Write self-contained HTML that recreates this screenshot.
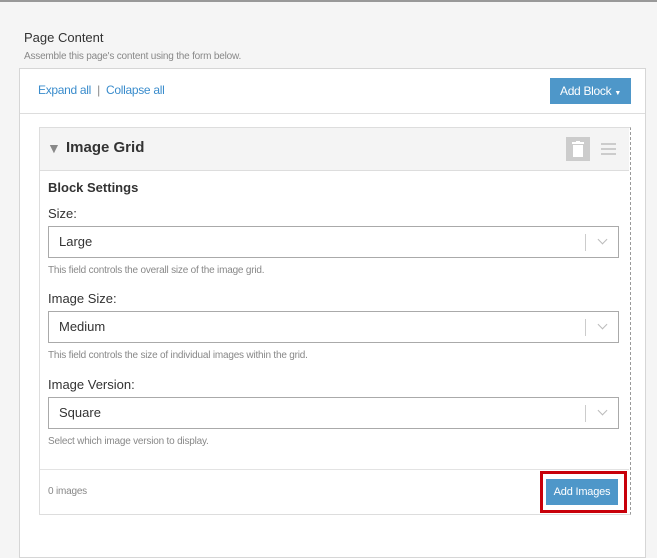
<!DOCTYPE html>
<html><head><style>
body{margin:0;width:657px;height:545px;background:#f5f5f5;font-family:"Liberation Sans",sans-serif;position:relative;overflow:hidden}
.a{position:absolute}
.lbl{font-size:13px;color:#333}
.help{font-size:10px;color:#888;letter-spacing:-0.2px}
.sel{position:absolute;left:48px;width:571px;height:32px;border:1px solid #aaa;background:#fff;box-sizing:border-box;font-size:13px;color:#333;line-height:30px;padding-left:10px}
.sel:after{content:"";position:absolute;right:32px;top:7px;height:17px;border-left:1px solid #ccc}
.chev{position:absolute;right:12px;top:9px;width:6px;height:6px;border-right:1.5px solid #bbb;border-bottom:1.5px solid #bbb;transform:rotate(45deg)}
</style></head><body>
<div class="a" style="left:0;top:0;width:657px;height:2px;background:#999"></div>
<div class="a" style="left:24px;top:30px;font-size:13px;color:#333">Page Content</div>
<div class="a help" style="left:24px;top:51px">Assemble this page's content using the form below.</div>
<div class="a" style="left:19px;top:68px;width:627px;height:490px;background:#fff;border:1px solid #d6d6d6;box-sizing:border-box"></div>
<div class="a" style="left:20px;top:113px;width:625px;height:1px;background:#ddd"></div>
<div class="a" style="left:38px;top:83px;font-size:12px;color:#3a8ccc;letter-spacing:-0.3px">Expand all <span style="color:#888">&nbsp;|&nbsp;</span> Collapse all</div>
<div class="a" style="left:550px;top:78px;width:81px;height:26px;background:#4e97c9;color:#fff;font-size:12px;line-height:26px;text-align:center;letter-spacing:-0.3px">Add Block <span style="font-size:7px">&#9660;</span></div>
<div class="a" style="left:39px;top:127px;width:592px;height:388px;border:1px solid #ddd;border-right:1px dashed #999;box-sizing:border-box"></div>
<div class="a" style="left:40px;top:128px;width:589px;height:42px;background:#f4f4f4;border-bottom:1px solid #ddd"></div>
<div class="a" style="left:47px;top:140px;font-size:14px;color:#888">&#9660;</div>
<div class="a" style="left:66px;top:139px;font-size:15px;font-weight:bold;color:#333">Image Grid</div>
<div class="a" style="left:566px;top:137px;width:24px;height:24px;background:#ccc"><svg width="24" height="24"><rect x="7" y="8" width="10" height="12" fill="#fff"/><rect x="6" y="5" width="12" height="2" fill="#fff"/><rect x="10" y="4" width="4" height="2" fill="#fff"/></svg></div>
<div class="a" style="left:601px;top:143px;width:15px;height:2px;background:#ccc;box-shadow:0 5px 0 #ccc,0 10px 0 #ccc"></div>
<div class="a lbl" style="left:48px;top:180px;font-weight:bold">Block Settings</div>
<div class="a lbl" style="left:48px;top:206px">Size:</div>
<div class="sel" style="top:226px">Large<div class="chev"></div></div>
<div class="a help" style="left:48px;top:265px">This field controls the overall size of the image grid.</div>
<div class="a lbl" style="left:48px;top:291px">Image Size:</div>
<div class="sel" style="top:311px">Medium<div class="chev"></div></div>
<div class="a help" style="left:48px;top:350px">This field controls the size of individual images within the grid.</div>
<div class="a lbl" style="left:48px;top:377px">Image Version:</div>
<div class="sel" style="top:397px">Square<div class="chev"></div></div>
<div class="a help" style="left:48px;top:436px">Select which image version to display.</div>
<div class="a" style="left:40px;top:469px;width:589px;height:1px;background:#e3e3e3"></div>
<div class="a help" style="left:48px;top:486px">0 images</div>
<div class="a" style="left:540px;top:471px;width:87px;height:42px;border:3px solid #c8000a;box-sizing:border-box"></div>
<div class="a" style="left:546px;top:479px;width:72px;height:26px;background:#4e97c9;color:#fff;font-size:11px;line-height:26px;text-align:center;letter-spacing:-0.2px">Add Images</div>
</body></html>
